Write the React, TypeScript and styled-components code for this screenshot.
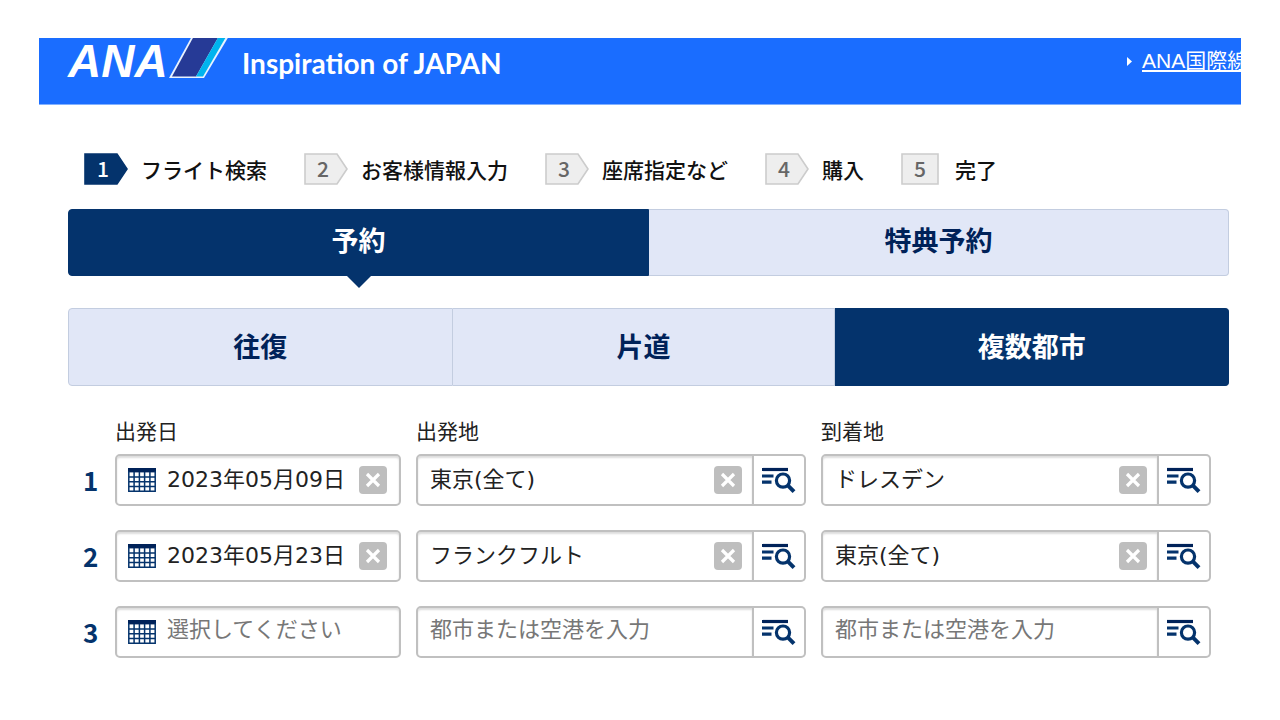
import React, { useState } from "react";
import styled, { createGlobalStyle } from "styled-components";

const NAVY = "#04336c";
const INK = "#002259";
const PALE = "#e1e7f7";
const LINE = "#c0c0c0";
const JP = '"Noto Sans CJK JP", sans-serif';

const GlobalStyle = createGlobalStyle`
  *, *::before, *::after { box-sizing: border-box; }
  body { margin: 0; background: #fff; color: #222; font-family: ${JP}; }
  button, input { font: inherit; margin: 0; }
`;

const Page = styled.div`
  padding: 38px 39px;
`;

const Header = styled.header`
  display: flex;
  align-items: flex-start;
  height: 67px;
  padding-left: 29px;
  background: #1a6dff;
  border-bottom: 1px solid #82b1ff;
  color: #fff;
`;

const Brand = styled.a`
  display: flex;
  align-items: flex-start;
  color: inherit;
  text-decoration: none;
`;

const BrandName = styled.span`
  width: 100px;
  font: italic 700 46px/46px "Liberation Sans", sans-serif;
`;

const Tagline = styled.span`
  margin-left: 12px;
  font: 700 28px/50px Lato, sans-serif;
  white-space: nowrap;
`;

const HeaderNav = styled.nav`
  display: flex;
  align-items: center;
  gap: 10px;
  width: 114px;
  height: 46px;
  margin-left: auto;
  overflow: hidden;
`;

const Caret = styled.svg`
  flex: none;
`;

const HeaderLink = styled.a`
  flex: none;
  color: #fff;
  font: 21px/30px "Liberation Sans", "Noto Sans CJK JP", sans-serif;
  text-underline-offset: 2px;
  white-space: nowrap;
`;

const Main = styled.main`
  padding: 48px 12px 0 29px;
`;

const Steps = styled.ol`
  display: flex;
  gap: 37px;
  margin: 0 0 24px;
  padding: 0 0 0 16px;
  list-style: none;
`;

const Step = styled.li<{ $last?: boolean }>`
  display: flex;
  align-items: center;
  gap: ${(p) => (p.$last ? 16 : 13)}px;
  height: 32px;
  color: #111;
  font-size: 21px;
  font-weight: 500;
  line-height: 30px;
  white-space: nowrap;
`;

const Badge = styled.span<{ $active?: boolean; $last?: boolean }>`
  display: grid;
  grid-template-columns: 38px;
  width: ${(p) => (p.$last ? 38 : 44)}px;
  text-align: center;
  font-size: 21px;
  color: ${(p) => (p.$active ? "#fff" : "#666")};

  > * { grid-area: 1 / 1; }
`;

const TabRow = styled.div`
  display: flex;
`;

const Tab = styled.button<{ $grow: number; $tall?: boolean }>`
  position: relative;
  flex: ${(p) => p.$grow} 1 0;
  height: ${(p) => (p.$tall ? 78 : 67)}px;
  padding: 0 0 ${(p) => (p.$tall ? 2 : 6)}px;
  border: 1px solid #c3cde0;
  border-left-width: 0;
  background: ${PALE};
  color: ${INK};
  font-size: 27px;
  font-weight: 700;
  line-height: 40px;
  cursor: pointer;

  &:first-child { border-left-width: 1px; border-radius: 4px 0 0 4px; }
  &:last-child { border-radius: 0 4px 4px 0; }
  &[aria-selected="true"] { background: ${NAVY}; border-color: ${NAVY}; color: #fff; }
`;

const Pointer = styled.svg`
  position: absolute;
  top: 100%;
  left: 50%;
  margin-left: -13px;
`;

const TripTabs = styled(TabRow)`
  margin-top: 32px;
`;

const Segments = styled.form`
  display: grid;
  gap: 24px;
  padding: 28px 18px 0 0;
`;

const SegmentRow = styled.div<{ $head?: boolean }>`
  display: grid;
  grid-template-columns: 32px 286px 1fr 1fr;
  column-gap: 15px;
  align-items: center;
  margin-bottom: ${(p) => (p.$head ? -16 : 0)}px;
`;

const ColumnLabel = styled.label`
  font-size: 21px;
  line-height: 32px;
`;

const RowNumber = styled.span`
  padding-left: 15px;
  color: ${NAVY};
  font-size: 26px;
  font-weight: 700;
  line-height: 36px;
`;

const Field = styled.div`
  display: flex;
  min-width: 0;
  height: 52px;
`;

const InputBox = styled.div<{ $joined?: boolean }>`
  display: flex;
  flex: 1;
  align-items: center;
  gap: 11px;
  min-width: 0;
  padding: 0 ${(p) => (p.$joined ? 10 : 12)}px 0 ${(p) => (p.$joined ? 12 : 11)}px;
  border: 2px solid ${LINE};
  border-radius: ${(p) => (p.$joined ? "5px 0 0 5px" : "5px")};
  box-shadow: inset 0 2px 2px #ddd;
`;

const TextInput = styled.input`
  flex: 1;
  width: 0;
  min-width: 0;
  height: 40px;
  padding: 0 0 6px;
  border: 0;
  outline: 0;
  background: transparent;
  color: #222;
  font: 22px/34px "DejaVu Sans", "Noto Sans CJK JP", sans-serif;

  &::placeholder { color: #777; opacity: 1; }
`;

const ClearButton = styled.button`
  display: flex;
  flex: none;
  align-items: center;
  justify-content: center;
  width: 28px;
  height: 28px;
  padding: 0;
  border: 0;
  border-radius: 4px;
  background: #bebebe;
  cursor: pointer;
`;

const LookupButton = styled.button`
  display: flex;
  flex: none;
  align-items: center;
  justify-content: center;
  width: 52px;
  padding: 0;
  border: 2px solid ${LINE};
  border-left: 0;
  border-radius: 0 5px 5px 0;
  background: #fff;
  cursor: pointer;
`;

const CalendarSvg = styled.svg`
  flex: none;
`;

const TailStripes = () => (
  <svg width="62" height="41" viewBox="0 0 62 41" aria-hidden="true">
    <path d="M24 -2 L1 40 H36 L61 -2 Z" fill="#e8f2ff" />
    <path d="M26 -2 L4 38.5 H28 L51 -2 Z" fill="#263a96" />
    <path d="M51 -2 L28 38.5 H35 L58.5 -2 Z" fill="#00b4ee" />
  </svg>
);

const CalendarIcon = () => (
  <CalendarSvg width="28" height="24" viewBox="0 0 28 24" aria-hidden="true">
    <path d="M0 0H28V4.4H0Z" fill={INK} />
    <path
      d="M.8 3V23.2H27.2V3M6.1 4V23M11.4 4V23M16.6 4V23M21.9 4V23M1 9H27M1 13.7H27M1 18.4H27"
      fill="none"
      stroke={NAVY}
      strokeWidth="1.5"
    />
  </CalendarSvg>
);

const CrossIcon = () => (
  <svg width="16" height="16" viewBox="0 0 16 16" aria-hidden="true">
    <path d="M2 2L14 14M14 2L2 14" stroke="#fff" strokeWidth="3.2" />
  </svg>
);

const LookupIcon = () => (
  <svg width="34" height="26" viewBox="0 0 34 26" fill="none" stroke={NAVY} aria-hidden="true">
    <path d="M0 2.5H26" stroke={INK} strokeWidth="3.2" />
    <path d="M0 9H11.5M0 15.2H9.5" strokeWidth="3.2" />
    <circle cx="21" cy="13.6" r="6.6" strokeWidth="3.2" />
    <path d="M25.8 18.4L32 24.6" strokeWidth="4" />
  </svg>
);

const steps = ["フライト検索", "お客様情報入力", "座席指定など", "購入", "完了"];
const bookingTabs = ["予約", "特典予約"];
const tripTabs = [
  { name: "往復", grow: 384 },
  { name: "片道", grow: 383 },
  { name: "複数都市", grow: 394 },
];
const columns = ["出発日", "出発地", "到着地"];
const CITY_HINT = "都市または空港を入力";
const initialRows = [
  ["2023年05月09日", "東京(全て)", "ドレスデン"],
  ["2023年05月23日", "フランクフルト", "東京(全て)"],
  ["", "", ""],
];

export default function App() {
  const [booking, setBooking] = useState(0);
  const [trip, setTrip] = useState(2);
  const [rows, setRows] = useState(initialRows);

  const update = (r: number, c: number, value: string) =>
    setRows(rows.map((row, i) => (i === r ? row.map((v, j) => (j === c ? value : v)) : row)));

  return (
    <>
      <GlobalStyle />
      <Page>
        <Header>
          <Brand href="#">
            <BrandName>ANA</BrandName>
            <TailStripes />
            <Tagline>Inspiration of JAPAN</Tagline>
          </Brand>
          <HeaderNav>
            <Caret width="5" height="9" viewBox="0 0 5 9" aria-hidden="true">
              <path d="M0 0L5 4.5L0 9Z" fill="#fff" />
            </Caret>
            <HeaderLink href="#">ANA国際線</HeaderLink>
          </HeaderNav>
        </Header>

        <Main>
          <Steps>
            {steps.map((name, i) => {
              const last = i === steps.length - 1;
              return (
                <Step key={name} $last={last} aria-current={i === 0 ? "step" : undefined}>
                  <Badge $active={i === 0} $last={last}>
                    <svg width="44" height="32" viewBox="0 0 44 32" aria-hidden="true">
                      <path
                        d={last ? "M1 1H37V31H1Z" : "M1 1H33L43 16L33 31H1Z"}
                        fill={i === 0 ? NAVY : "#eee"}
                        stroke={i === 0 ? NAVY : "#ccc"}
                        strokeWidth="1.6"
                      />
                    </svg>
                    <span>{i + 1}</span>
                  </Badge>
                  {name}
                </Step>
              );
            })}
          </Steps>

          <TabRow role="tablist">
            {bookingTabs.map((name, i) => (
              <Tab key={name} type="button" role="tab" $grow={1} aria-selected={booking === i} onClick={() => setBooking(i)}>
                {name}
                {booking === i && (
                  <Pointer width="26" height="13" viewBox="0 0 26 13" aria-hidden="true">
                    <path d="M0 0H26L13 13Z" fill={NAVY} />
                  </Pointer>
                )}
              </Tab>
            ))}
          </TabRow>

          <TripTabs role="tablist">
            {tripTabs.map((t, i) => (
              <Tab key={t.name} type="button" role="tab" $tall $grow={t.grow} aria-selected={trip === i} onClick={() => setTrip(i)}>
                {t.name}
              </Tab>
            ))}
          </TripTabs>

          <Segments>
            <SegmentRow $head>
              <span />
              {columns.map((name, c) => (
                <ColumnLabel key={name} htmlFor={`field-0-${c}`}>
                  {name}
                </ColumnLabel>
              ))}
            </SegmentRow>
            {rows.map((row, r) => (
              <SegmentRow key={r}>
                <RowNumber>{r + 1}</RowNumber>
                {row.map((value, c) => (
                  <Field key={c}>
                    <InputBox $joined={c > 0}>
                      {c === 0 && <CalendarIcon />}
                      <TextInput
                        id={`field-${r}-${c}`}
                        aria-label={`${columns[c]} ${r + 1}`}
                        value={value}
                        placeholder={c === 0 ? "選択してください" : CITY_HINT}
                        onChange={(e) => update(r, c, e.target.value)}
                      />
                      {value && (
                        <ClearButton type="button" aria-label="クリア" onClick={() => update(r, c, "")}>
                          <CrossIcon />
                        </ClearButton>
                      )}
                    </InputBox>
                    {c > 0 && (
                      <LookupButton type="button" aria-label="一覧から選択">
                        <LookupIcon />
                      </LookupButton>
                    )}
                  </Field>
                ))}
              </SegmentRow>
            ))}
          </Segments>
        </Main>
      </Page>
    </>
  );
}
